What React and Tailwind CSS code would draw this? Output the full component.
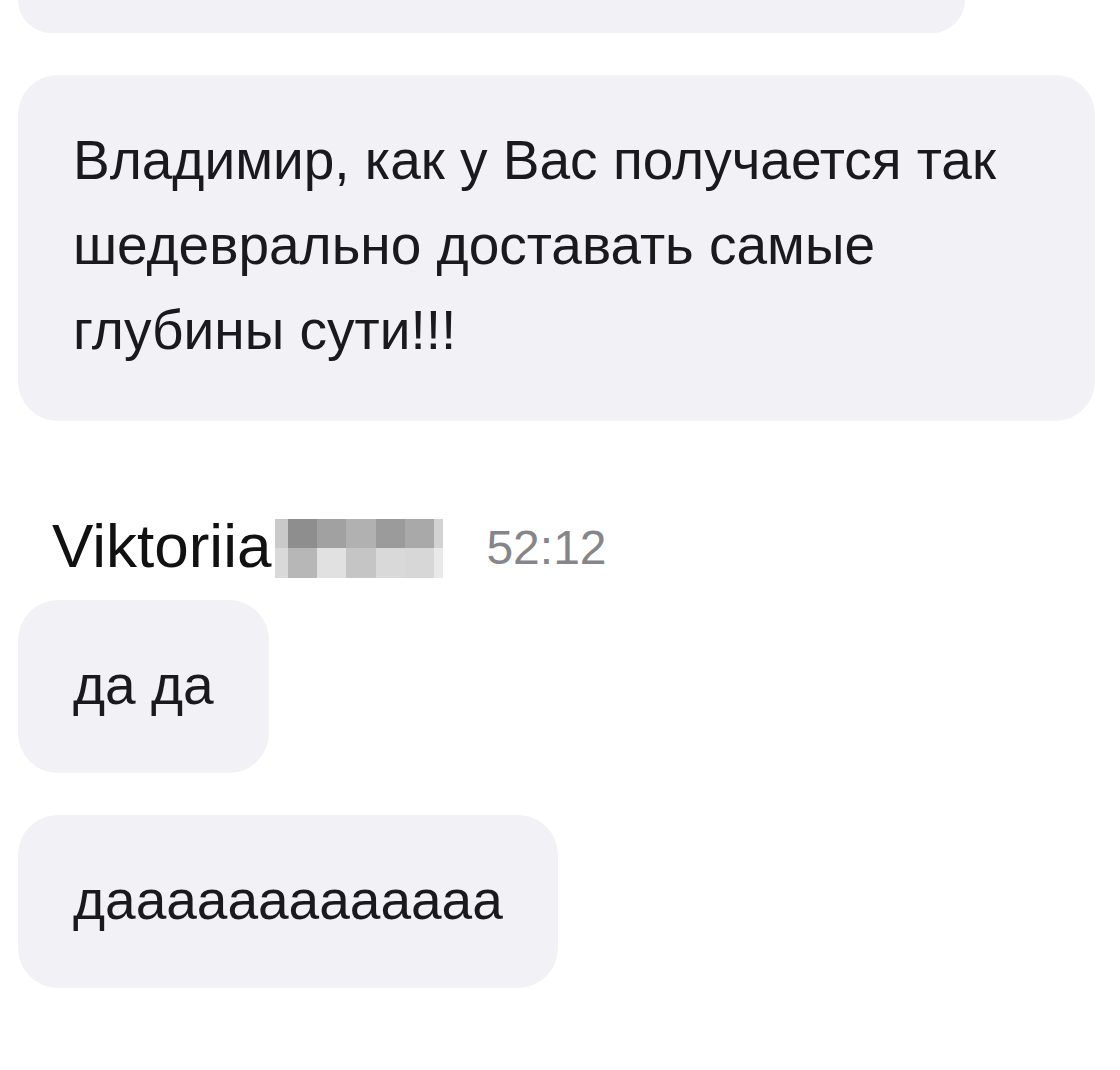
const mosaicTop = ['#c9c9c9', '#8e8e8e', '#a1a1a1', '#b1b1b1', '#9b9b9b', '#a9a9a9', '#d2d2d2'];
const mosaicBottom = ['#d9d9d9', '#b7b7b7', '#e1e1e1', '#c5c5c5', '#d9d9d9', '#d7d7d7', '#e9e9e9'];

function Mosaic() {
  // blurred-out surname
  return (
    <div className="grid grid-cols-[13px_29px_29px_30px_29px_29px_9px] grid-rows-[29px_30px] w-[168px] h-[59px]">
      {mosaicTop.map((c, i) => (
        <div key={'t' + i} style={{ background: c }} />
      ))}
      {mosaicBottom.map((c, i) => (
        <div key={'b' + i} style={{ background: c }} />
      ))}
    </div>
  );
}

function Bubble({ children, className = '' }) {
  return (
    <div className={`bg-[#f1f1f6] rounded-[40px] px-[55px] pt-[43px] pb-[45px] text-[55px] leading-[85px] text-[#1a1a1c] ${className}`}>
      {children}
    </div>
  );
}

export default function App() {
  return (
    <div className="min-h-[1070px] bg-white pl-[18px] flex flex-col items-start"
         style={{ fontFamily: '"Liberation Sans", Arial, sans-serif' }}>
      <div className="w-[947px] h-[33px] bg-[#f1f1f6] rounded-b-[40px]" />

      <Bubble className="mt-[42px] w-[1077px] !pb-[48px]">
        Владимир, как у Вас получается так шедеврально доставать самые глубины сути!!!
      </Bubble>

      <div className="mt-[97px] ml-[34px] flex items-center h-[60px]">
        <span className="text-[62px] leading-none text-[#111] -translate-y-[2px]">Viktoriia</span>
        <div className="ml-[4px]">
          <Mosaic />
        </div>
        <span className="ml-[43px] text-[48px] leading-none text-[#85858a]">52:12</span>
      </div>

      <Bubble className="mt-[22px]">да да</Bubble>
      <Bubble className="mt-[42px]">дааааааааааааа</Bubble>
    </div>
  );
}
